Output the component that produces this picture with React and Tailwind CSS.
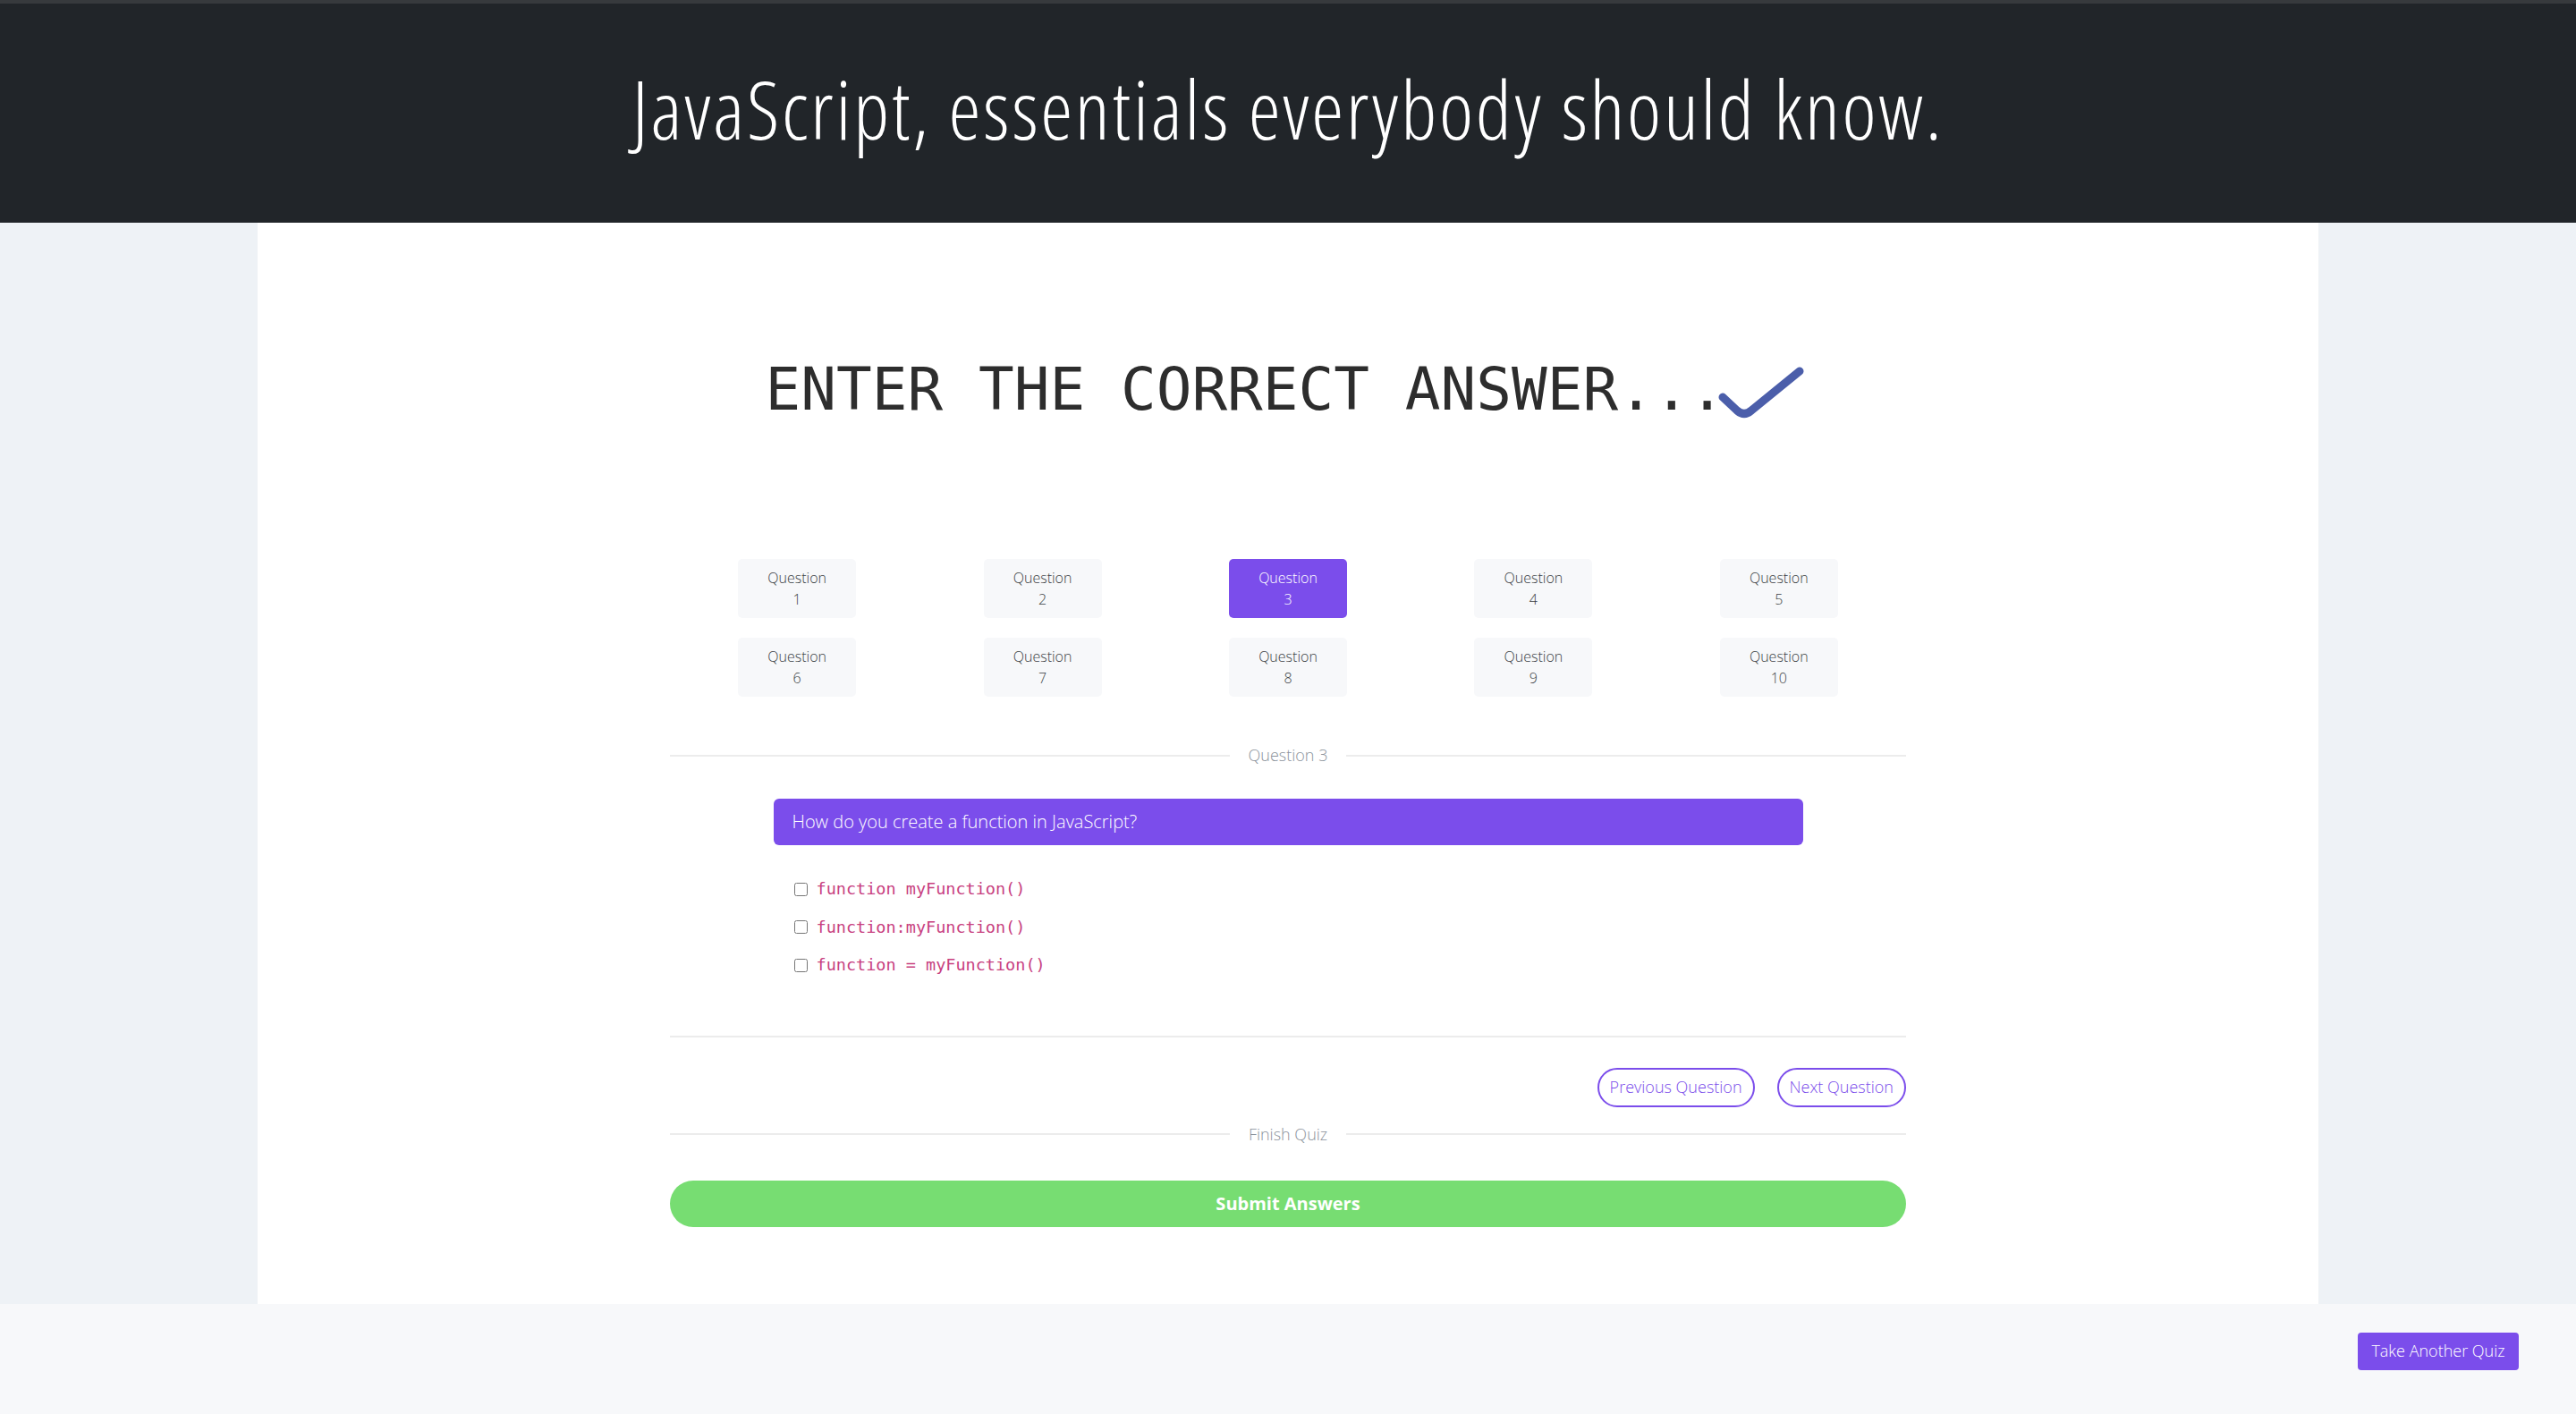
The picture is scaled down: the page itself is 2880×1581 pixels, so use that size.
import { useState } from "react";

const questions = [1, 2, 3, 4, 5, 6, 7, 8, 9, 10];

const options = ["function myFunction()", "function:myFunction()", "function = myFunction()"];

function Divider({ label }) {
  return (
    <div className="flex items-center gap-[21px]">
      <div className="h-[2px] flex-1 bg-[#ececec]" />
      <span className="text-[18px] leading-[27px] text-[#8c939c]">{label}</span>
      <div className="h-[2px] flex-1 bg-[#ececec]" />
    </div>
  );
}

export default function App() {
  const [current, setCurrent] = useState(3);

  return (
    <div className="min-h-screen bg-[#eef2f6] font-['Open_Sans','Noto_Sans',sans-serif] font-light">
      {/* Header */}
      <header className="flex h-[249px] items-center justify-center border-t-4 border-[#373a3d] bg-[#212529]">
        <h1 className="pb-[10px] font-['Open_Sans',sans-serif] text-[91px] font-light leading-none tracking-[0.03em] text-white font-stretch-condensed">
          JavaScript, essentials everybody should know.
        </h1>
      </header>

      {/* Card */}
      <main className="mx-auto w-[2304px] bg-white pt-[153px] pb-[86px]">
        <div className="flex items-center justify-center pr-[4px]">
          <h2 className="font-['DejaVu_Sans_Mono',monospace] text-[66px] font-normal leading-none text-[#2d2d2d]">
            ENTER THE CORRECT ANSWER...
          </h2>
          <svg width="100" height="70" viewBox="0 0 100 70" className="-mb-[2px] -ml-[8px]">
            <path
              d="M6 42 L22 57 Q30 64 38 57 L92 13"
              fill="none"
              stroke="#4b5eaa"
              strokeWidth="9"
              strokeLinecap="round"
              strokeLinejoin="round"
            />
          </svg>
        </div>

        <div className="mx-auto mt-[155px] w-[1382px]">
          {/* Question nav */}
          <div className="mx-auto grid w-[1372px] grid-cols-5 gap-y-[22px]">
            {questions.map((q) => (
              <button
                key={q}
                onClick={() => setCurrent(q)}
                className={`mx-auto flex h-[66px] w-[132px] flex-col items-center justify-center rounded-[5px] text-[16px] leading-[24px] ${
                  current === q ? "bg-[#7b4deb] text-white" : "bg-[#f7f8fa] text-[#3b3f44]"
                }`}
              >
                <span>Question</span>
                <span>{q}</span>
              </button>
            ))}
          </div>

          <div className="mt-[52px]">
            <Divider label={`Question ${current}`} />
          </div>

          {/* Question body */}
          <div className="mx-auto mt-[35px] w-[1151px]">
            <div className="flex h-[52px] items-center rounded-[6px] bg-[#7b4deb] px-[21px] text-[20px] text-white">
              How do you create a function in JavaScript?
            </div>
            <div className="mt-[28px] flex flex-col pl-[23px]">
              {options.map((o) => (
                <label key={o} className="flex h-[42.5px] items-center gap-[10px]">
                  <input type="checkbox" className="h-[15px] w-[15px] accent-[#7b4deb]" />
                  <code className="font-['DejaVu_Sans_Mono',monospace] text-[18.5px] font-normal text-[#c8417f]">{o}</code>
                </label>
              ))}
            </div>
          </div>

          <div className="mt-[57px] h-[2px] bg-[#ececec]" />

          <div className="mt-[34px] flex justify-end gap-[25px]">
            <button className="h-[44px] rounded-full border-2 border-[#7b4deb] px-[12px] text-[18px] text-[#7b4deb]">
              Previous Question
            </button>
            <button className="h-[44px] rounded-full border-2 border-[#7b4deb] px-[12px] text-[18px] text-[#7b4deb]">
              Next Question
            </button>
          </div>

          <div className="mt-[17px]">
            <Divider label="Finish Quiz" />
          </div>

          <button className="mt-[38px] h-[52px] w-full rounded-full bg-[#77dd72] text-[20px] font-bold text-white">
            Submit Answers
          </button>
        </div>
      </main>

      {/* Footer */}
      <footer className="flex h-[124px] justify-end bg-[#f7f8fa] pt-[32px] pr-[64px]">
        <button className="h-[42px] w-[180px] rounded-[4px] bg-[#7b4deb] text-[18px] text-white">
          Take Another Quiz
        </button>
      </footer>
    </div>
  );
}
